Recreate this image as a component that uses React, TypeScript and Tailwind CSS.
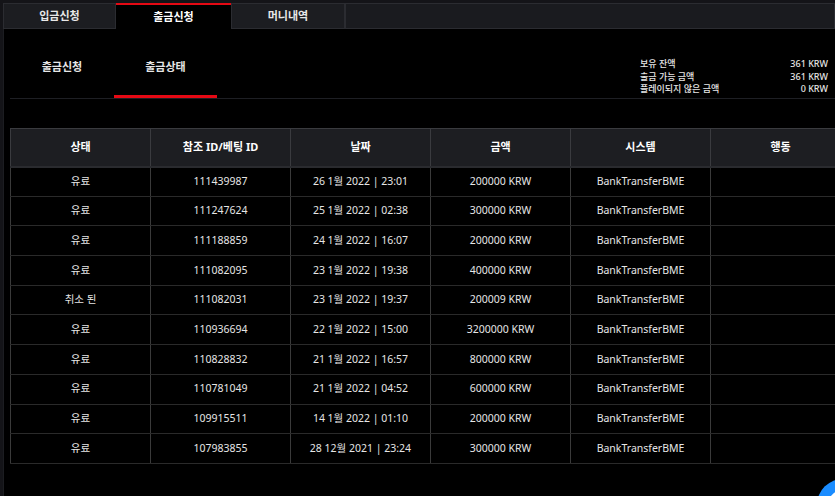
import React from 'react';

const rows = [
  { status: '유료', id: '111439987', date: '26 1월 2022 | 23:01', amount: '200000 KRW' },
  { status: '유료', id: '111247624', date: '25 1월 2022 | 02:38', amount: '300000 KRW' },
  { status: '유료', id: '111188859', date: '24 1월 2022 | 16:07', amount: '200000 KRW' },
  { status: '유료', id: '111082095', date: '23 1월 2022 | 19:38', amount: '400000 KRW' },
  { status: '취소 된', id: '111082031', date: '23 1월 2022 | 19:37', amount: '200009 KRW' },
  { status: '유료', id: '110936694', date: '22 1월 2022 | 15:00', amount: '3200000 KRW' },
  { status: '유료', id: '110828832', date: '21 1월 2022 | 16:57', amount: '800000 KRW' },
  { status: '유료', id: '110781049', date: '21 1월 2022 | 04:52', amount: '600000 KRW' },
  { status: '유료', id: '109915511', date: '14 1월 2022 | 01:10', amount: '200000 KRW' },
  { status: '유료', id: '107983855', date: '28 12월 2021 | 23:24', amount: '300000 KRW' },
];

const headers = ['상태', '참조 ID/베팅 ID', '날짜', '금액', '시스템', '행동'];

const font = { fontFamily: '"Noto Sans", "Noto Sans CJK KR", sans-serif' };

const App = () => {
  return (
    <div className="relative w-[835px] h-[496px] overflow-hidden bg-[#141418] pl-[3px] pt-[3px] text-white" style={font}>
      {/* top tabs */}
      <div className="flex h-[26px]">
        <div className="w-[113px] flex items-center justify-center bg-[#1c1d21] border border-[#2b2c31] text-[11px] font-bold text-[#e8e8e8]">
          입금신청
        </div>
        <div className="w-[115px] flex items-center justify-center bg-black border-t-2 border-[#e50914] text-[11px] font-bold text-white">
          출금신청
        </div>
        <div className="w-[114px] flex items-center justify-center bg-[#1c1d21] border border-[#2b2c31] text-[11px] font-bold text-[#e8e8e8]">
          머니내역
        </div>
        <div className="flex-1 bg-[#1a1b1f] border border-[#2b2c31]" />
      </div>

      <div className="h-full bg-black border-l border-[#1c1d21] pl-[6px]">
        {/* sub nav */}
        <div className="flex justify-between border-b border-[#1e1f24]">
          <div className="flex">
            <div className="w-[104px] h-[69px] pt-[31px] text-center text-[11px] leading-[14px] font-semibold text-[#e6e6e6] border-b-[3px] border-transparent">
              출금신청
            </div>
            <div className="w-[103px] h-[69px] pt-[31px] text-center text-[11px] leading-[14px] font-semibold text-[#e6e6e6] border-b-[3px] border-[#e50914]">
              출금상태
            </div>
          </div>
          <div className="w-[188px] mr-[7px] mt-[29px] text-[9px] leading-[12.5px] font-medium text-[#e6e6e6]">
            <div className="flex justify-between"><span>보유 잔액</span><span>361 KRW</span></div>
            <div className="flex justify-between"><span>출금 가능 금액</span><span>361 KRW</span></div>
            <div className="flex justify-between"><span>플레이되지 않은 금액</span><span>0 KRW</span></div>
          </div>
        </div>

        {/* table */}
        <table className="mt-[29px] w-[840px] table-fixed border-collapse text-[10.5px]">
          <thead>
            <tr className="h-[38px] bg-[#1d1e22]">
              {headers.map((h) => (
                <th key={h} className="w-[140px] text-[11px] font-bold text-white border border-[#3a3b3f] border-b-2 border-b-[#2a2b2f]">
                  {h}
                </th>
              ))}
            </tr>
          </thead>
          <tbody>
            {rows.map((r) => (
              <tr key={r.id} className="h-[29.7px]">
                <td className="text-center text-[#e6e6e6] border border-[#3a3a3a] border-y-[#2a2a2a]">{r.status}</td>
                <td className="text-center text-[#e6e6e6] border border-[#3a3a3a] border-y-[#2a2a2a]">{r.id}</td>
                <td className="text-center text-[#e6e6e6] border border-[#3a3a3a] border-y-[#2a2a2a]">{r.date}</td>
                <td className="text-center text-[#e6e6e6] border border-[#3a3a3a] border-y-[#2a2a2a]">{r.amount}</td>
                <td className="text-center text-[#e6e6e6] border border-[#3a3a3a] border-y-[#2a2a2a]">BankTransferBME</td>
                <td className="border border-[#3a3a3a] border-y-[#2a2a2a]" />
              </tr>
            ))}
          </tbody>
        </table>
      </div>

      {/* floating chat button */}
      <div className="absolute left-[817px] top-[479px] w-[52px] h-[52px] rounded-full bg-[#1a8cff] flex items-center justify-center">
        <div className="w-[30px] h-[30px] rounded-full border-[3px] border-white" />
      </div>
    </div>
  );
};

export default App;
